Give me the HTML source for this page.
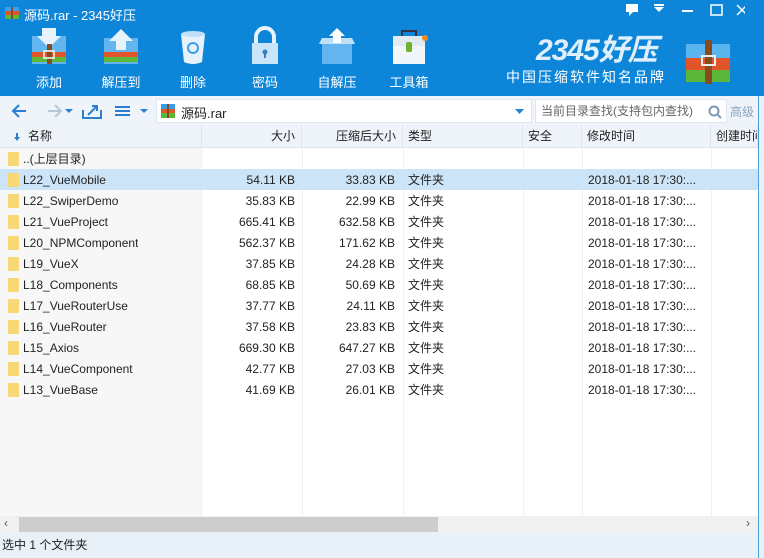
<!DOCTYPE html>
<html><head><meta charset="utf-8"><style>
*{margin:0;padding:0;box-sizing:border-box}
body{width:764px;height:558px;overflow:hidden;font-family:"Liberation Sans","Noto Sans CJK SC",sans-serif;font-size:12px;color:#222;background:#fff;position:relative}
.top{position:absolute;left:0;top:0;width:764px;height:96px;background:#0d86d9}
.title{position:absolute;left:24px;top:5px;color:#fff;font-size:13px}
.tb{position:absolute;top:26px;width:60px;text-align:center;color:#fff;font-size:13px}
.tb svg{display:block;margin:0 auto 6px}
.nav{position:absolute;left:0;top:96px;width:764px;height:29px;background:#eef4fa}
.path{position:absolute;left:156px;top:99px;width:376px;height:24px;background:#fff;border:1px solid #e0e6ee}
.search{position:absolute;left:535px;top:99px;width:192px;height:24px;background:#fff;border:1px solid #e0e6ee;color:#666;font-size:12px;line-height:22px;padding-left:5px}
.hdr{position:absolute;left:0;top:125px;width:758px;height:23px;background:#eef4fa;border-bottom:1px solid #dde4ec}
.c{position:absolute;height:100%;white-space:nowrap;overflow:hidden;line-height:23px}
.hdr .c{line-height:22px;border-right:1px solid #dde4ec}
.list{position:absolute;left:0;top:148px;width:758px;height:368px;background:#fff}
.namecol{position:absolute;left:0;top:148px;width:202px;height:368px;background:#f7f7f7;border-right:1px solid #eee}
.vl{position:absolute;top:148px;height:368px;width:1px;background:#f0f0f0}
.row{position:absolute;left:0;width:758px;height:21px}
.sel{background:#cce4f7}
.fold{position:absolute;left:8px;top:4px;width:11px;height:14px;background:#f8d775;border-radius:1px}
.r{text-align:right}
.sb{position:absolute;left:0;top:516px;width:758px;height:17px;background:#f0f0f0}
.st{position:absolute;left:0;top:533px;width:764px;height:25px;background:#e8f0f8;line-height:25px;padding-left:2px}
.edge{position:absolute;right:0;top:96px;width:6px;height:462px;background:#e8f0f8;border-left:1px solid #4a9fde}
</style></head><body>
<div class="top">
<svg style="position:absolute;left:4px;top:6px" width="16" height="14"><rect x="1" y="1" width="14" height="4" fill="#3a9ee8"/><rect x="1" y="5" width="14" height="4" fill="#e2552a"/><rect x="1" y="9" width="14" height="4" fill="#5cb83a"/><rect x="7" y="1" width="2" height="12" fill="#8a4a20"/></svg>
<div class="title">源码.rar - 2345好压</div>
<div class="tb" style="left:19px"><svg width="40" height="40"><rect x="3" y="10" width="34" height="28" fill="#62b5ee"/><rect x="3" y="26" width="34" height="5" fill="#e2552a"/><rect x="3" y="31" width="34" height="5" fill="#5cb83a"/><polygon points="13,2 27,2 27,10 32,10 20,22 8,10 13,10" fill="#e6f3fd"/><rect x="18" y="18" width="5" height="20" fill="#8a4a20"/><rect x="15" y="25" width="10" height="7" fill="none" stroke="#fff" stroke-width="1.5"/></svg>添加</div>
<div class="tb" style="left:91px"><svg width="40" height="40"><rect x="3" y="12" width="34" height="26" fill="#62b5ee"/><rect x="3" y="26" width="34" height="5" fill="#e2552a"/><rect x="3" y="31" width="34" height="5" fill="#5cb83a"/><polygon points="20,3 32,15 25,15 25,24 15,24 15,15 8,15" fill="#e6f3fd"/></svg>解压到</div>
<div class="tb" style="left:163px"><svg width="40" height="40"><path d="M8 8 L32 8 L29 36 Q20 40 11 36 Z" fill="#e6f3fd"/><ellipse cx="20" cy="8" rx="12" ry="3" fill="#bfe0f7"/><circle cx="20" cy="22" r="5" fill="none" stroke="#3a9ee8" stroke-width="2"/></svg>删除</div>
<div class="tb" style="left:235px"><svg width="40" height="40"><path d="M11 18 V11 A9 9 0 0 1 29 11 V18" fill="none" stroke="#e6f3fd" stroke-width="4"/><rect x="7" y="17" width="26" height="21" fill="#c8e5fa"/><circle cx="20" cy="26" r="2.5" fill="#3a7ec0"/><rect x="19" y="26" width="2" height="6" fill="#3a7ec0"/></svg>密码</div>
<div class="tb" style="left:307px"><svg width="40" height="40"><rect x="5" y="18" width="30" height="20" fill="#62b5ee"/><polygon points="2,18 38,18 35,12 5,12" fill="#bfe0f7"/><polygon points="20,2 28,10 24,10 24,17 16,17 16,10 12,10" fill="#fff"/></svg>自解压</div>
<div class="tb" style="left:379px"><svg width="40" height="40"><path d="M13 10 V5 H27 V10" fill="none" stroke="#334" stroke-width="2"/><rect x="4" y="10" width="32" height="28" fill="#f0f6fa"/><rect x="4" y="10" width="32" height="10" fill="#dfeaf2"/><rect x="17" y="16" width="6" height="10" rx="2" fill="#6cb22c"/><circle cx="36" cy="12" r="3" fill="#f08a24"/></svg>工具箱</div>
<svg style="position:absolute;left:625px;top:3px" width="120" height="14"><rect x="1" y="1" width="12" height="8" fill="#fff"/><polygon points="4,9 8,9 4,13" fill="#fff"/><polygon points="29,4 39,4 34,9" fill="#fff"/><rect x="29" y="1" width="10" height="2" fill="#fff"/><rect x="57" y="7" width="11" height="2" fill="#fff"/><rect x="86" y="2" width="11" height="10" fill="none" stroke="#fff" stroke-width="1.5"/><path d="M112 2 L122 12 M122 2 L112 12" stroke="#fff" stroke-width="1.5"/></svg>
<div style="position:absolute;left:536px;top:36px;color:#dff0fc;font-size:30px;font-weight:bold;font-style:italic;letter-spacing:-1px;line-height:30px">2345好压</div>
<div style="position:absolute;left:506px;top:67px;color:#fff;font-size:14px;letter-spacing:2px">中国压缩软件知名品牌</div>
<svg style="position:absolute;left:684px;top:38px" width="48" height="46"><rect x="2" y="6" width="44" height="14" fill="#5ab4ee"/><rect x="2" y="20" width="44" height="12" fill="#e2552a"/><rect x="2" y="32" width="44" height="12" fill="#5cb83a"/><rect x="21" y="2" width="7" height="44" fill="#8a4a20"/><rect x="18" y="18" width="13" height="9" fill="none" stroke="#eee" stroke-width="2"/></svg>
</div>
<div class="nav"></div>
<svg style="position:absolute;left:10px;top:102px" width="145" height="18"><path d="M3 9 H16 M9 3 L3 9 L9 15" stroke="#2a7fd0" stroke-width="2" fill="none"/><path d="M38 9 H51 M45 3 L51 9 L45 15" stroke="#b8c8d8" stroke-width="2" fill="none"/><polygon points="55,7 63,7 59,11" fill="#2a7fd0"/><path d="M73 8 V16 H91 V8" stroke="#2a7fd0" stroke-width="2" fill="none"/><path d="M78 13 L86 5 M82 4 H87 V9" stroke="#2a7fd0" stroke-width="2" fill="none"/><rect x="105" y="4" width="15" height="2" fill="#2a7fd0"/><rect x="105" y="8" width="15" height="2" fill="#2a7fd0"/><rect x="105" y="12" width="15" height="2" fill="#2a7fd0"/><polygon points="130,7 138,7 134,11" fill="#2a7fd0"/></svg>
<div class="path"><svg style="position:absolute;left:3px;top:3px" width="16" height="16"><rect x="1" y="1" width="14" height="5" fill="#3a9ee8"/><rect x="1" y="6" width="14" height="4" fill="#e2552a"/><rect x="1" y="10" width="14" height="5" fill="#5cb83a"/><rect x="7" y="1" width="2" height="14" fill="#8a4a20"/></svg><span style="position:absolute;left:24px;top:3px;font-size:13px">源码.rar</span><svg style="position:absolute;left:358px;top:9px" width="9" height="5"><polygon points="0,0 9,0 4.5,5" fill="#2a7fd0"/></svg></div>
<div class="search">当前目录查找(支持包内查找)<svg style="position:absolute;left:172px;top:5px" width="14" height="14"><circle cx="6" cy="6" r="4.5" stroke="#7a9ab8" stroke-width="2" fill="none"/><path d="M9 9 L13 13" stroke="#7a9ab8" stroke-width="2"/></svg></div>
<div style="position:absolute;left:730px;top:103px;color:#8aa4c0;font-size:12px">高级</div>
<div class="hdr">
<div class="c" style="left:0;width:202px;padding-left:28px">名称<svg style="position:absolute;left:14px;top:8px" width="7" height="8"><rect x="2" y="0" width="2" height="4" fill="#2a7fd0"/><polygon points="0,4 6,4 3,8" fill="#2a7fd0"/></svg></div>
<div class="c r" style="left:202px;width:100px;padding-right:6px">大小</div>
<div class="c r" style="left:302px;width:101px;padding-right:6px">压缩后大小</div>
<div class="c" style="left:403px;width:120px;padding-left:5px">类型</div>
<div class="c" style="left:523px;width:59px;padding-left:5px">安全</div>
<div class="c" style="left:582px;width:129px;padding-left:5px">修改时间</div>
<div class="c" style="left:711px;width:47px;padding-left:5px">创建时间</div>
</div>
<div class="list"></div>
<div class="namecol"></div>
<div class="vl" style="left:302px"></div><div class="vl" style="left:403px"></div><div class="vl" style="left:523px"></div><div class="vl" style="left:582px"></div><div class="vl" style="left:711px"></div>
<div class="row" style="top:148px"><div class="fold"></div><div class="c" style="left:23px">..(上层目录)</div></div>
<div class="row sel" style="top:169px"><div class="fold"></div><div class="c" style="left:23px">L22_VueMobile</div><div class="c r" style="left:202px;width:93px">54.11 KB</div><div class="c r" style="left:302px;width:93px">33.83 KB</div><div class="c" style="left:408px">文件夹</div><div class="c" style="left:588px">2018-01-18 17:30:...</div></div>
<div class="row" style="top:190px"><div class="fold"></div><div class="c" style="left:23px">L22_SwiperDemo</div><div class="c r" style="left:202px;width:93px">35.83 KB</div><div class="c r" style="left:302px;width:93px">22.99 KB</div><div class="c" style="left:408px">文件夹</div><div class="c" style="left:588px">2018-01-18 17:30:...</div></div>
<div class="row" style="top:211px"><div class="fold"></div><div class="c" style="left:23px">L21_VueProject</div><div class="c r" style="left:202px;width:93px">665.41 KB</div><div class="c r" style="left:302px;width:93px">632.58 KB</div><div class="c" style="left:408px">文件夹</div><div class="c" style="left:588px">2018-01-18 17:30:...</div></div>
<div class="row" style="top:232px"><div class="fold"></div><div class="c" style="left:23px">L20_NPMComponent</div><div class="c r" style="left:202px;width:93px">562.37 KB</div><div class="c r" style="left:302px;width:93px">171.62 KB</div><div class="c" style="left:408px">文件夹</div><div class="c" style="left:588px">2018-01-18 17:30:...</div></div>
<div class="row" style="top:253px"><div class="fold"></div><div class="c" style="left:23px">L19_VueX</div><div class="c r" style="left:202px;width:93px">37.85 KB</div><div class="c r" style="left:302px;width:93px">24.28 KB</div><div class="c" style="left:408px">文件夹</div><div class="c" style="left:588px">2018-01-18 17:30:...</div></div>
<div class="row" style="top:274px"><div class="fold"></div><div class="c" style="left:23px">L18_Components</div><div class="c r" style="left:202px;width:93px">68.85 KB</div><div class="c r" style="left:302px;width:93px">50.69 KB</div><div class="c" style="left:408px">文件夹</div><div class="c" style="left:588px">2018-01-18 17:30:...</div></div>
<div class="row" style="top:295px"><div class="fold"></div><div class="c" style="left:23px">L17_VueRouterUse</div><div class="c r" style="left:202px;width:93px">37.77 KB</div><div class="c r" style="left:302px;width:93px">24.11 KB</div><div class="c" style="left:408px">文件夹</div><div class="c" style="left:588px">2018-01-18 17:30:...</div></div>
<div class="row" style="top:316px"><div class="fold"></div><div class="c" style="left:23px">L16_VueRouter</div><div class="c r" style="left:202px;width:93px">37.58 KB</div><div class="c r" style="left:302px;width:93px">23.83 KB</div><div class="c" style="left:408px">文件夹</div><div class="c" style="left:588px">2018-01-18 17:30:...</div></div>
<div class="row" style="top:337px"><div class="fold"></div><div class="c" style="left:23px">L15_Axios</div><div class="c r" style="left:202px;width:93px">669.30 KB</div><div class="c r" style="left:302px;width:93px">647.27 KB</div><div class="c" style="left:408px">文件夹</div><div class="c" style="left:588px">2018-01-18 17:30:...</div></div>
<div class="row" style="top:358px"><div class="fold"></div><div class="c" style="left:23px">L14_VueComponent</div><div class="c r" style="left:202px;width:93px">42.77 KB</div><div class="c r" style="left:302px;width:93px">27.03 KB</div><div class="c" style="left:408px">文件夹</div><div class="c" style="left:588px">2018-01-18 17:30:...</div></div>
<div class="row" style="top:379px"><div class="fold"></div><div class="c" style="left:23px">L13_VueBase</div><div class="c r" style="left:202px;width:93px">41.69 KB</div><div class="c r" style="left:302px;width:93px">26.01 KB</div><div class="c" style="left:408px">文件夹</div><div class="c" style="left:588px">2018-01-18 17:30:...</div></div>
<div class="sb"><div style="position:absolute;left:19px;top:1px;width:419px;height:15px;background:#cdcdcd"></div><span style="position:absolute;left:4px;top:0;font-size:12px;color:#555">‹</span><span style="position:absolute;left:746px;top:0;font-size:12px;color:#555">›</span></div>
<div class="st">选中 1 个文件夹</div>
<div class="edge"></div>
</body></html>
